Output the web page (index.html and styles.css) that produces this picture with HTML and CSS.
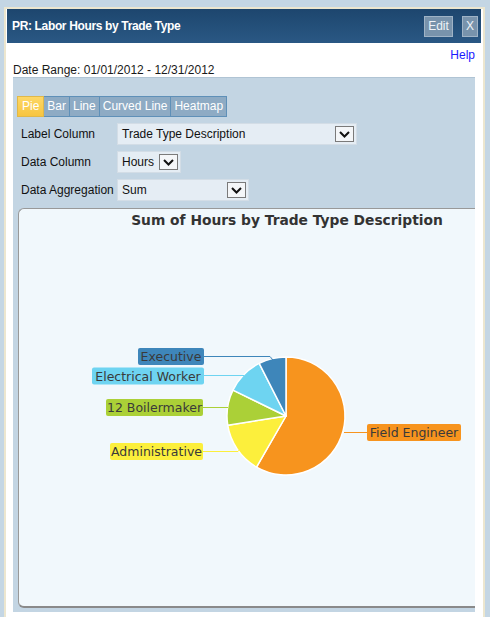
FILE: index.html
```html
<!DOCTYPE html>
<html>
<head>
<meta charset="utf-8">
<link rel="stylesheet" href="styles.css">
</head>
<body>
<div class="panel">
  <div class="header">
    <div class="title">PR: Labor Hours by Trade Type</div>
    <div class="hbtns">
      <span class="hbtn edit">Edit</span>
      <span class="hbtn close">X</span>
    </div>
  </div>
  <div class="content">
    <div class="help"><a href="#">Help</a></div>
    <div class="date">Date Range: 01/01/2012 - 12/31/2012</div>
    <div class="options">
      <div class="tabs">
        <span class="tab active">Pie</span>
        <span class="tab">Bar</span>
        <span class="tab">Line</span>
        <span class="tab">Curved Line</span>
        <span class="tab">Heatmap</span>
      </div>
      <div class="row">
        <span class="lbl">Label Column</span>
        <div class="select w-label"><span>Trade Type Description</span><span class="arrow"><svg width="11" height="7" viewBox="0 0 11 7"><path d="M1 1 L5.5 5.5 L10 1" fill="none" stroke="#111" stroke-width="2"/></svg></span></div>
      </div>
      <div class="row">
        <span class="lbl">Data Column</span>
        <div class="select w-data"><span>Hours</span><span class="arrow"><svg width="11" height="7" viewBox="0 0 11 7"><path d="M1 1 L5.5 5.5 L10 1" fill="none" stroke="#111" stroke-width="2"/></svg></span></div>
      </div>
      <div class="row">
        <span class="lbl">Data Aggregation</span>
        <div class="select w-agg"><span>Sum</span><span class="arrow"><svg width="11" height="7" viewBox="0 0 11 7"><path d="M1 1 L5.5 5.5 L10 1" fill="none" stroke="#111" stroke-width="2"/></svg></span></div>
      </div>
      <div class="chart">
        <svg class="chart-svg" width="470" height="397" viewBox="0 0 470 397">
          <text class="ctitle" x="268" y="16" text-anchor="middle">Sum of Hours by Trade Type Description</text>
          <g stroke="#ffffff" stroke-width="1.5" stroke-linejoin="round">
            <path d="M267,207 L267,148 A59,59 0 1 1 237.5,258.1 Z" fill="#f7941e"/>
            <path d="M267,207 L237.5,258.1 A59,59 0 0 1 208.73,216.23 Z" fill="#fcef3c"/>
            <path d="M267,207 L208.73,216.23 A59,59 0 0 1 213.97,181.13 Z" fill="#abd037"/>
            <path d="M267,207 L213.97,181.13 A59,59 0 0 1 240.21,154.43 Z" fill="#6ed4f1"/>
            <path d="M267,207 L240.21,154.43 A59,59 0 0 1 267,148 Z" fill="#3e86ba"/>
          </g>
          <g fill="none" stroke-width="1">
            <path d="M185,147.5 L251,147.5 L254,151" stroke="#3e86ba"/>
            <path d="M185,166.5 L225,166.5" stroke="#6ed4f1"/>
            <path d="M184,198.5 L209,198.5" stroke="#abd037"/>
            <path d="M184,242.5 L219,242.5 L221,240" stroke="#fcef3c"/>
            <path d="M325,223.5 L348,223.5" stroke="#f7941e"/>
          </g>
          <rect x="119" y="139" width="66" height="17" rx="2" fill="#3e86ba"/>
          <rect x="73" y="158.5" width="112" height="17" rx="2" fill="#6ed4f1"/>
          <rect x="87" y="190" width="97" height="17" rx="2" fill="#abd037"/>
          <rect x="91" y="234" width="93" height="17" rx="2" fill="#fcef3c"/>
          <rect x="348" y="215" width="94" height="17" rx="2" fill="#f7941e"/>
          <text class="lab" x="152" y="152" text-anchor="middle">Executive</text>
          <text class="lab" x="129" y="171.5" text-anchor="middle">Electrical Worker</text>
          <text class="lab" x="135.5" y="203" text-anchor="middle">12 Boilermaker</text>
          <text class="lab" x="137.5" y="247" text-anchor="middle">Administrative</text>
          <text class="lab" x="395" y="228" text-anchor="middle">Field Engineer</text>
        </svg>
      </div>
    </div>
  </div>
</div>
</body>
</html>
```

FILE: styles.css
```css
html, body {
  margin: 0;
  padding: 0;
}
body {
  background: #c4d6e4;
  font-family: "Liberation Sans", Arial, sans-serif;
  font-size: 12px;
  color: #111;
  height: 617px;
  overflow: hidden;
}
.panel {
  margin: 7px 5px 0 4px;
  border: 2px solid #ece6cf;
  border-bottom: none;
  background: #ffffff;
  padding: 0 2px 0 1px;
  height: 620px;
}
.header {
  height: 34px;
  background: linear-gradient(#1d466e, #2a5884);
  display: flex;
  align-items: center;
  justify-content: space-between;
  padding: 0 3px 0 5px;
}
.title {
  color: #ffffff;
  font-weight: bold;
  font-size: 12px;
  letter-spacing: -0.35px;
}
.hbtns {
  display: flex;
  gap: 9px;
}
.hbtn {
  height: 19px;
  line-height: 19px;
  border: 1px solid #9fb3c6;
  background: #7893ac;
  color: #eef3f8;
  font-size: 12px;
  text-align: center;
}
.edit { width: 27px; }
.close { width: 14px; }
.content {
  padding: 0 6px 0 6px;
}
.help {
  text-align: right;
  padding-top: 5px;
  line-height: 14px;
}
.help a {
  color: #1a1aff;
  text-decoration: none;
}
.date {
  line-height: 14px;
  padding-top: 1px;
  color: #1a1a1a;
}
.options {
  background: #c3d5e3;
  border-top: 1px solid #b0c4d4;
  padding: 18px 0 4px 4px;
}
.tabs {
  display: flex;
}
.tab {
  height: 19px;
  line-height: 19px;
  padding: 0 3px;
  background: #8eabc4;
  color: #ffffff;
  border: 1px solid #5f90b8;
  border-left: none;
}
.tab:first-child {
  border-left: 1px solid #5f90b8;
}
.tab.active {
  background: linear-gradient(#fdd766, #f7c540);
  border-color: #e0b848;
  padding: 0 4px;
}
.row {
  display: flex;
  align-items: center;
  margin-top: 6px;
}
.lbl {
  width: 96px;
  padding-left: 4px;
  color: #111;
}
.select {
  height: 20px;
  background: #e5edf4;
  border: 1px solid #d3dde6;
  display: flex;
  align-items: center;
  justify-content: space-between;
  padding: 0 2px 0 4px;
  box-sizing: content-box;
}
.w-label { width: 232px; }
.w-data { width: 56px; }
.w-agg { width: 124px; }
.arrow {
  width: 17px;
  height: 14px;
  background: #f4f6f8;
  border: 1px solid #7a7a7a;
  display: flex;
  align-items: center;
  justify-content: center;
}
.chart {
  margin-top: 7px;
  margin-left: 1px;
  height: 397px;
  background: #f1f8fc;
  border-top: 1px solid #999999;
  border-left: 1px solid #999999;
  border-bottom: 2px solid #8a8a8a;
  border-radius: 6px 0 0 6px;
  overflow: hidden;
}
.chart-svg {
  display: block;
}
.ctitle {
  font-family: "DejaVu Sans", Verdana, sans-serif;
  font-weight: bold;
  font-size: 13.8px;
  fill: #333333;
}
.lab {
  font-family: "DejaVu Sans", Verdana, sans-serif;
  font-size: 12.5px;
  fill: #3a3a3a;
}
```
